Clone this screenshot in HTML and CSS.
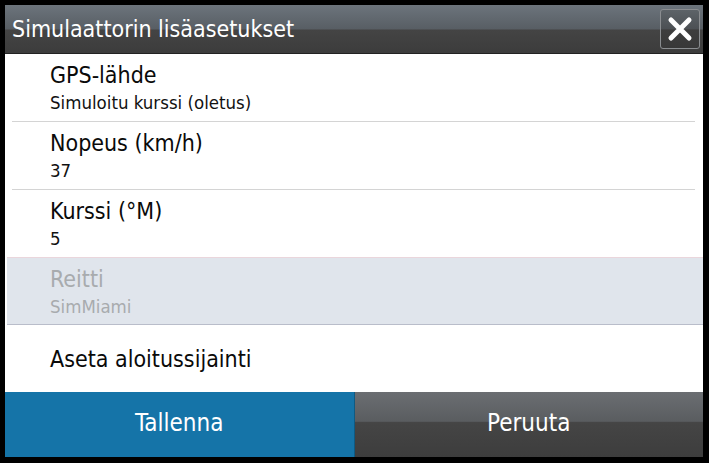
FILE: index.html
```html
<!DOCTYPE html>
<html lang="fi">
<head>
<meta charset="utf-8">
<title>Simulaattorin lisäasetukset</title>
<link rel="stylesheet" href="styles.css">
</head>
<body>
<div class="dialog">
  <header class="header">
    <h1 class="title">Simulaattorin lisäasetukset</h1>
    <button class="close" aria-label="Sulje">
      <svg width="26" height="26" viewBox="0 0 26 26"><path d="M4 4 L22 22 M22 4 L4 22" stroke="#fff" stroke-width="5" stroke-linecap="round" fill="none"/></svg>
    </button>
  </header>
  <div class="list">
    <div class="row">
      <div class="row-title">GPS-lähde</div>
      <div class="row-value">Simuloitu kurssi (oletus)</div>
    </div>
    <div class="row">
      <div class="row-title">Nopeus (km/h)</div>
      <div class="row-value">37</div>
    </div>
    <div class="row">
      <div class="row-title">Kurssi (°M)</div>
      <div class="row-value">5</div>
    </div>
    <div class="row row-disabled">
      <div class="row-title">Reitti</div>
      <div class="row-value">SimMiami</div>
    </div>
    <div class="row row-single">
      <div class="row-title">Aseta aloitussijainti</div>
    </div>
  </div>
  <footer class="footer">
    <button class="btn btn-primary">Tallenna</button>
    <button class="btn btn-secondary">Peruuta</button>
  </footer>
</div>
</body>
</html>
```
FILE: styles.css
```css
html, body {
  margin: 0;
  padding: 0;
  background: #000;
}
body {
  width: 709px;
  height: 463px;
  overflow: hidden;
  font-family: "DejaVu Sans Condensed", "Liberation Sans Narrow", "Liberation Sans", sans-serif;
}
.dialog {
  margin: 5px 6px 6px 5px;
  width: 698px;
  height: 452px;
  display: flex;
  flex-direction: column;
  background: #fff;
}
.header {
  height: 49px;
  flex: none;
  display: flex;
  align-items: center;
  justify-content: space-between;
  padding: 0 3px 0 7px;
  box-sizing: border-box;
  background: linear-gradient(#6c747c 0%, #585e64 50%, #444 52%, #3c3c3c 100%);
  border-bottom: 1px solid #222;
}
.title {
  margin: 0;
  font-weight: normal;
  font-size: 23px;
  color: #fff;
}
.close {
  width: 40px;
  height: 40px;
  box-sizing: border-box;
  border: 1px solid #8a8d90;
  border-radius: 3px;
  background: linear-gradient(#5d6368 0%, #4c5054 50%, #3e3e3e 52%, #383838 100%);
  display: flex;
  align-items: center;
  justify-content: center;
  padding: 0;
}
.list {
  flex: 1;
  display: flex;
  flex-direction: column;
}
.row {
  height: 68px;
  flex: none;
  box-sizing: border-box;
  padding: 7px 0 0 38px;
  margin: 0 8px 0 7px;
  border-bottom: 1px solid #d4d4d4;
}
.row-title {
  font-size: 23px;
  line-height: 28px;
  color: #0a0a0a;
}
.row-value {
  font-size: 18.5px;
  line-height: 22px;
  margin-top: 3px;
  color: #111;
}
.row-disabled {
  margin: -1px 0 0 2px;
  padding-left: 43px;
  background: #e0e5ec;
  border-top: 1px solid #ead6dc;
  border-bottom: 1px solid #b9bdca;
}
.row-disabled .row-title,
.row-disabled .row-value {
  color: #a8abae;
}
.row-single {
  border-bottom: none;
  display: flex;
  align-items: center;
  padding-top: 0;
  flex: 1;
}
.footer {
  height: 65px;
  flex: none;
  display: flex;
}
.btn {
  flex: 1;
  border: none;
  margin: 0;
  padding: 0 0 4px;
  font-family: inherit;
  font-size: 24px;
  color: #fff;
}
.btn-primary {
  background: #1574a8;
  border-right: 1px solid #0e5a83;
}
.btn-secondary {
  background: linear-gradient(#6b6e72 0%, #5a5d60 45%, #454545 47%, #3d3d3d 100%);
}
```
